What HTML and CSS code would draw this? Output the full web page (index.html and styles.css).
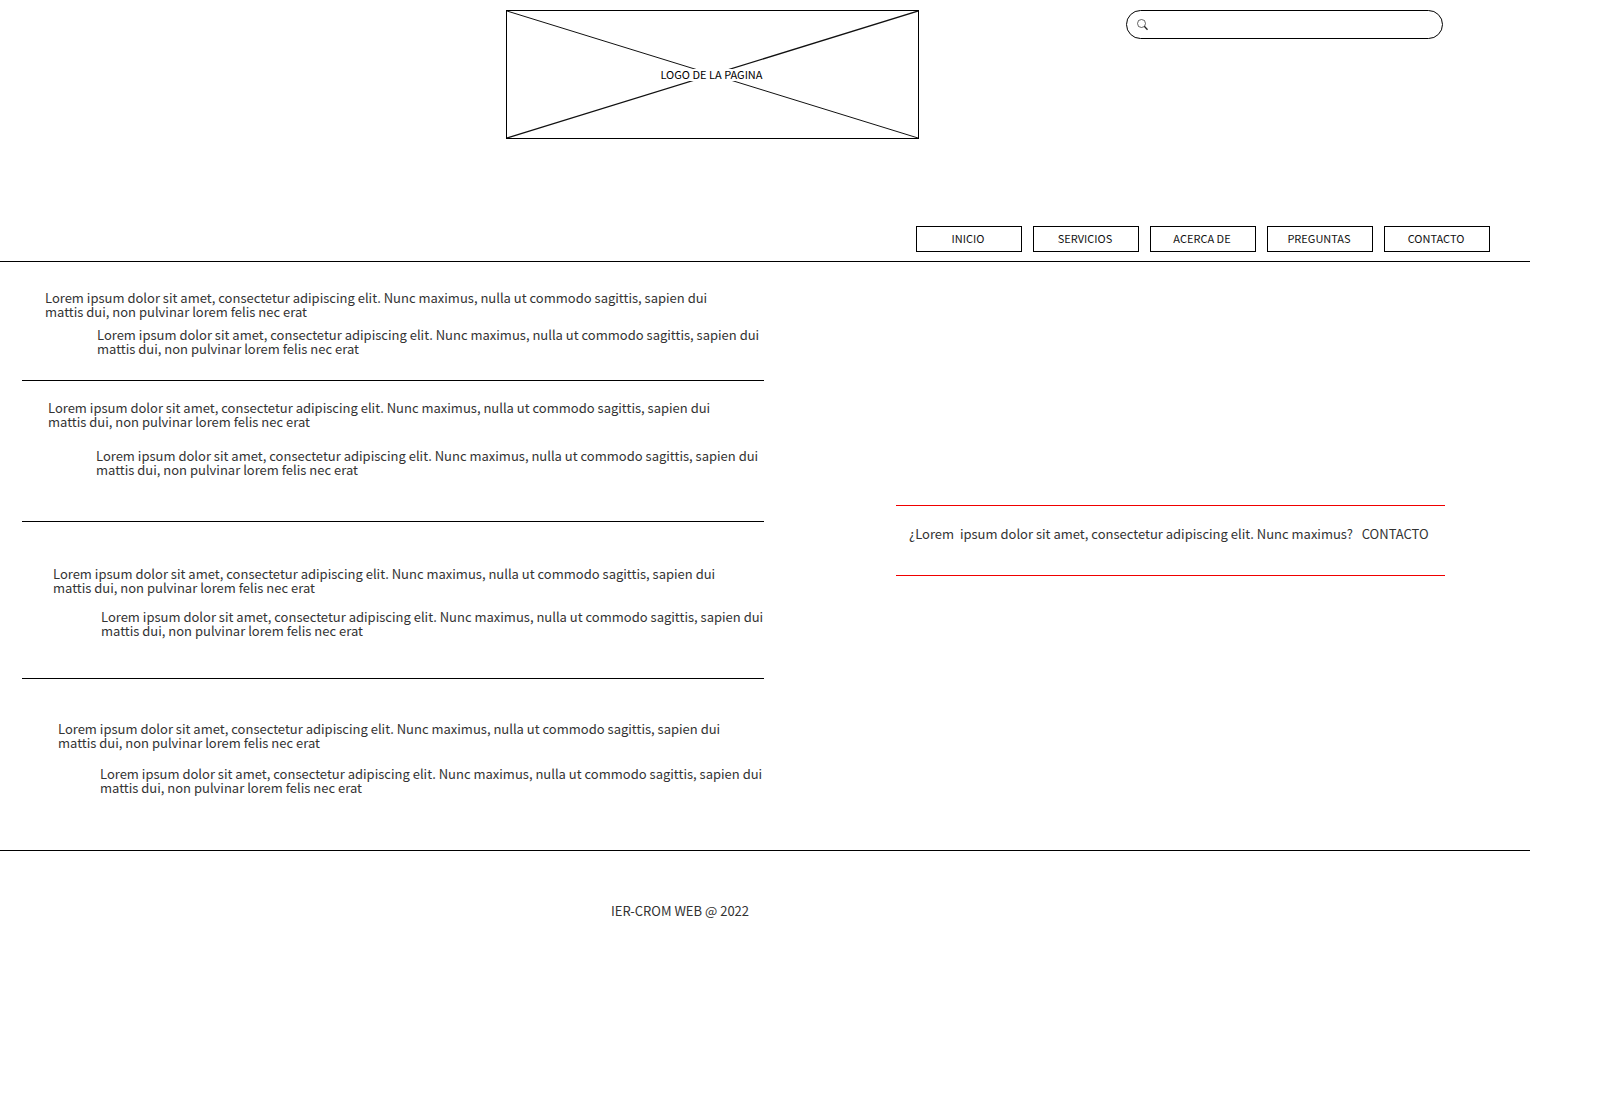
FILE: index.html
```html
<!DOCTYPE html>
<html lang="es">
<head>
<meta charset="utf-8">
<title>IER-CROM WEB</title>
<link rel="stylesheet" href="styles.css">
</head>
<body>
<header class="header">
  <div class="masthead">
    <div class="logo">
      <svg class="logo-cross" viewBox="0 0 411 127" preserveAspectRatio="none" aria-hidden="true">
        <path class="thin" d="M0 0L411 127"/>
        <path class="thick" d="M0 127L411 0"/>
      </svg>
      <span class="logo-mask"></span>
      <span class="logo-text">LOGO DE LA PAGINA</span>
    </div>
    <form class="search" role="search">
      <label class="search-label" for="q" aria-label="Buscar">
        <svg width="12" height="12" viewBox="0 0 12 12" fill="none" stroke="#222" aria-hidden="true">
          <circle cx="4.500" cy="4.500" r="4" stroke-width=".7"/>
          <path d="M7.300 7.300L10.500 10.800" stroke-width="1.300"/>
        </svg>
      </label>
      <input class="search-input" id="q" type="search">
    </form>
  </div>
  <nav class="nav">
    <button class="nav-button" type="button">INICIO</button>
    <button class="nav-button" type="button">SERVICIOS</button>
    <button class="nav-button" type="button">ACERCA DE</button>
    <button class="nav-button" type="button">PREGUNTAS</button>
    <button class="nav-button" type="button">CONTACTO</button>
  </nav>
</header>
<main class="main">
  <div class="entries">
    <section class="entry entry-first">
      <p class="text">Lorem ipsum dolor sit amet, consectetur adipiscing elit. Nunc maximus, nulla ut commodo sagittis, sapien dui mattis dui, non pulvinar lorem felis nec erat</p>
      <p class="text reply">Lorem ipsum dolor sit amet, consectetur adipiscing elit. Nunc maximus, nulla ut commodo sagittis, sapien dui mattis dui, non pulvinar lorem felis nec erat</p>
    </section>
    <section class="entry entry-second">
      <p class="text">Lorem ipsum dolor sit amet, consectetur adipiscing elit. Nunc maximus, nulla ut commodo sagittis, sapien dui mattis dui, non pulvinar lorem felis nec erat</p>
      <p class="text reply">Lorem ipsum dolor sit amet, consectetur adipiscing elit. Nunc maximus, nulla ut commodo sagittis, sapien dui mattis dui, non pulvinar lorem felis nec erat</p>
    </section>
    <section class="entry entry-third">
      <p class="text">Lorem ipsum dolor sit amet, consectetur adipiscing elit. Nunc maximus, nulla ut commodo sagittis, sapien dui mattis dui, non pulvinar lorem felis nec erat</p>
      <p class="text reply">Lorem ipsum dolor sit amet, consectetur adipiscing elit. Nunc maximus, nulla ut commodo sagittis, sapien dui mattis dui, non pulvinar lorem felis nec erat</p>
    </section>
    <section class="entry entry-fourth">
      <p class="text">Lorem ipsum dolor sit amet, consectetur adipiscing elit. Nunc maximus, nulla ut commodo sagittis, sapien dui mattis dui, non pulvinar lorem felis nec erat</p>
      <p class="text reply">Lorem ipsum dolor sit amet, consectetur adipiscing elit. Nunc maximus, nulla ut commodo sagittis, sapien dui mattis dui, non pulvinar lorem felis nec erat</p>
    </section>
  </div>
  <aside class="callout">
    <p class="text">¿Lorem&nbsp; ipsum dolor sit amet, consectetur adipiscing elit. Nunc maximus?&nbsp;&nbsp; <a class="link" href="#contacto">CONTACTO</a></p>
  </aside>
</main>
<footer class="footer">
  <p class="text">IER-CROM WEB @ 2022</p>
</footer>
</body>
</html>
```
FILE: styles.css
```css
* {
  box-sizing: border-box;
}

body {
  margin: 0;
  background: #fff;
  color: #333;
  font-family: "Noto Sans CJK SC", "Noto Sans", sans-serif;
  font-size: 13px;
  line-height: 14px;
}

.header,
.main {
  margin-right: 85px;
  border-bottom: 1px solid #000;
}

.masthead {
  display: grid;
  grid-template-columns: 506fr 413fr 207fr 317fr 87fr;
  align-items: start;
  padding-top: 10px;
}

.logo {
  grid-column: 2;
  display: grid;
  place-items: center;
  height: 129px;
  border: 1px solid #000;
  color: #000;
  font-size: 11px;
  line-height: 12px;
}

.logo > * {
  grid-area: 1 / 1;
}

.logo-cross {
  width: 100%;
  height: 127px;
  fill: none;
  stroke: #111;
}

.thin {
  stroke-width: 1;
}

.thick {
  stroke-width: 1.3;
}

.logo-mask {
  width: 100px;
  height: 12px;
  background: #fff;
}

.logo-text {
  padding: 0 2px 2px 0;
}

.search {
  grid-column: 4;
  display: flex;
  align-items: center;
  gap: 8px;
  height: 29px;
  padding: 0 12px 0 10px;
  border: 1px solid #000;
  border-radius: 15px;
}

.search-label {
  display: flex;
}

.search-input {
  flex: 1;
  min-width: 0;
  padding: 0;
  border: 0;
  outline: 0;
  background: none;
  font: inherit;
}

.nav {
  display: flex;
  justify-content: flex-end;
  gap: 11px;
  padding: 87px 40px 9px 0;
}

.nav-button {
  width: 106px;
  height: 26px;
  padding: 0 2px 2px 0;
  border: 1px solid #000;
  background: #fff;
  color: #111;
  font: inherit;
  font-size: 11px;
  line-height: 14px;
}

.main {
  display: grid;
  grid-template-columns: 764fr 132fr 549fr 85fr;
  align-items: start;
}

.entries {
  grid-column: 1;
}

.text {
  max-width: 680px;
  margin: 0;
}

.entry {
  display: flex;
  flex-direction: column;
  margin-left: 22px;
  border-bottom: 1px solid #000;
}

.entry-first {
  gap: 9px;
  padding: 29px 0 24px 23px;
}

.entry-second {
  gap: 20px;
  padding: 20px 0 44px 26px;
}

.entry-third {
  gap: 15px;
  padding: 45px 0 40px 31px;
}

.entry-fourth {
  gap: 17px;
  padding: 43px 0 55px 36px;
  border-bottom: 0;
}

.reply {
  margin-left: 48px;
}

.entry-first .reply {
  margin-left: 52px;
}

.entry-fourth .reply {
  margin-left: 42px;
}

.callout {
  grid-column: 3;
  margin-top: 243px;
  padding: 21px 0 34px 13px;
  border: solid #f00000;
  border-width: 1px 0;
}

.link {
  color: inherit;
  text-decoration: none;
}

.footer {
  display: grid;
  grid-template-columns: 611fr 1004fr;
  padding: 53px 0;
}

.footer .text {
  grid-column: 2;
}
```
